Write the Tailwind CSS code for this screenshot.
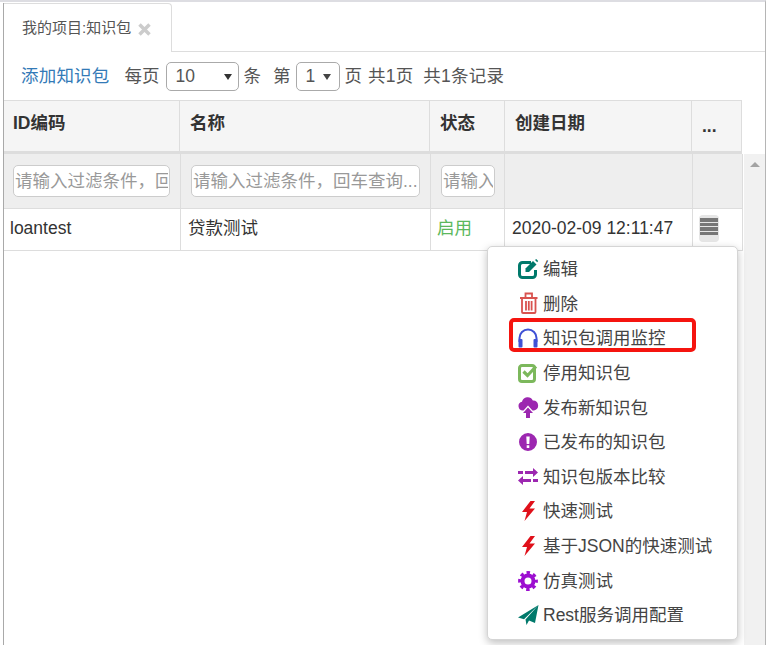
<!DOCTYPE html>
<html lang="zh">

<head>
  <meta charset="utf-8">
  <meta name="viewport" content="width=device-width, initial-scale=1.0">
  <script src="https://cdn.jsdelivr.net/npm/@tailwindcss/browser@4"></script>
  <title>知识包</title>
</head>

<body class="bg-white h-[645px] overflow-hidden font-['Liberation_Sans','Noto_Sans_CJK_SC',sans-serif] text-[17.5px] text-[#333]">
  <div class="relative h-[645px] w-[766px] border-t-2 border-t-[#dddde2] border-r border-r-[#b5b5b5] pt-px">
    <div class="h-[642px] ml-[3px] border-l border-l-[#a9a9a9] flex flex-col">

      <!-- Tabs -->
      <div class="h-[49px] shrink-0 flex border-b border-[#ddd]">
        <div class="w-[168px] h-[49px] bg-white border-r border-t border-[#ddd] rounded-tr-[4px] flex items-center pl-[18px] text-[15px] text-[#555]">
          <span>我的项目:知识包</span>
          <svg class="ml-[7px] mt-[3px] w-[13px] h-[13px]" viewBox="0 0 13 13"><path d="M1.500 1.500l10 10M11.500 1.500l-10 10" stroke="#ccc" stroke-width="3.500"/></svg>
        </div>
      </div>

      <!-- Toolbar -->
      <div class="h-[48px] shrink-0 flex items-center pl-[17px] text-[#555]">
        <a class="text-[#337ab7] mr-[15px] tracking-[0.2px]">添加知识包</a>
        <span>每页</span>
        <div class="relative ml-[6px] mr-[5px] h-[29px]">
          <select class="appearance-none w-[73px] h-[29px] border border-[#aaa] rounded-[5px] pl-[9px] text-[17.5px] bg-white text-[#555]"><option>10</option></select>
          <span class="absolute right-[7px] top-[12px] w-0 h-0 border-x-[4px] border-x-transparent border-t-[6px] border-t-[#333]"></span>
        </div>
        <span>条</span>
        <span class="ml-[12px]">第</span>
        <div class="relative mx-[5px] h-[29px]">
          <select class="appearance-none w-[44px] h-[29px] border border-[#aaa] rounded-[5px] pl-[9px] text-[17.5px] bg-white text-[#555]"><option>1</option></select>
          <span class="absolute right-[9px] top-[12px] w-0 h-0 border-x-[4px] border-x-transparent border-t-[6px] border-t-[#444]"></span>
        </div>
        <span>页</span>
        <span class="ml-[6px] tracking-[0.2px]">共1页</span>
        <span class="ml-[10px] tracking-[0.2px]">共1条记录</span>
      </div>

      <!-- Table head -->
      <div class="w-[738px] h-[54px] shrink-0 grid grid-cols-[176px_250px_75px_187px_50px] bg-[#f5f5f5] border-t border-[#ddd] border-b-[3px] border-b-[#ddd] font-bold text-[#333]">
        <div class="border-r border-[#ddd] pl-[9px] pt-[9px]">ID编码</div>
        <div class="border-r border-[#ddd] pl-[10px] pt-[9px]">名称</div>
        <div class="border-r border-[#ddd] pl-[10px] pt-[9px]">状态</div>
        <div class="border-r border-[#ddd] pl-[10px] pt-[9px]">创建日期</div>
        <div class="border-r border-[#ddd] pl-[10px] pt-[12px]">...</div>
      </div>

      <!-- Table body + scrollbar -->
      <div class="flex-1 flex min-h-0">
        <div class="w-[739px] shrink-0">
          <div class="h-[55px] grid grid-cols-[177px_250px_74px_188px_50px] bg-[#eee] border-b border-[#ddd]">
            <div class="border-r border-[#ddd] pl-[9px] pt-[11px]">
              <input class="w-[157px] h-[32px] bg-white border border-[#ccc] rounded-[5px] px-px text-[17.5px] placeholder:text-[#999]" placeholder="请输入过滤条件，回车查询...">
            </div>
            <div class="border-r border-[#ddd] pl-[10px] pt-[11px]">
              <input class="w-[229px] h-[32px] bg-white border border-[#ccc] rounded-[5px] px-px text-[17.5px] placeholder:text-[#999]" placeholder="请输入过滤条件，回车查询...">
            </div>
            <div class="border-r border-[#ddd] pl-[10px] pt-[11px]">
              <input class="w-[54px] h-[32px] bg-white border border-[#ccc] rounded-[5px] px-px text-[17.5px] placeholder:text-[#999]" placeholder="请输入过滤条件">
            </div>
            <div class="border-r border-[#ddd]"></div>
            <div class="border-r border-[#ddd]"></div>
          </div>
          <div class="h-[42px] grid grid-cols-[177px_250px_74px_188px_50px] border-b border-[#ddd] items-stretch">
            <div class="border-r border-[#ddd] pl-[6px] pb-[2px] flex items-center">loantest</div>
            <div class="border-r border-[#ddd] pl-[7px] pb-[2px] flex items-center">贷款测试</div>
            <div class="border-r border-[#ddd] pl-[6px] pb-[2px] flex items-center text-[#5cb85c]">启用</div>
            <div class="border-r border-[#ddd] pl-[7px] pb-[2px] flex items-center">2020-02-09 12:11:47</div>
            <div class="border-r border-[#ddd] pl-[6px] pt-[6px]">
              <div class="w-[20px] h-[27px] bg-[#e6e6e6] rounded-[4px] flex flex-col gap-px items-center pt-[3px]">
                <span class="w-[18px] h-[3.5px] bg-[#777]"></span>
                <span class="w-[18px] h-[3.5px] bg-[#777]"></span>
                <span class="w-[18px] h-[3.5px] bg-[#777]"></span>
                <span class="w-[18px] h-[3.5px] bg-[#777]"></span>
              </div>
            </div>
          </div>
        </div>
        <div class="w-[22px] ml-px bg-[#f1f1f1] flex justify-center pt-[8px]">
          <span class="w-0 h-0 border-x-[5px] border-x-transparent border-b-[5px] border-b-[#a3a3a3]"></span>
        </div>
      </div>
    </div>

    <!-- Dropdown menu -->
    <div class="absolute left-[487px] top-[244px] w-[251px] h-[394px] bg-white border border-[#d5d5d5] rounded-[5px] shadow-[0_3px_8px_rgba(0,0,0,0.25)] pt-[5px] text-[#444]">
      <div class="h-[34.6px] flex items-center pl-[30px] gap-[3px]">
        <svg class="w-[22px] h-[20px]" viewBox="0 0 22 20"><path d="M13 3.500H4.500a3 3 0 0 0-3 3v9a3 3 0 0 0 3 3h10a3 3 0 0 0 3-3V11" fill="none" stroke="#00796b" stroke-width="3"/><path d="M7.500 9.500 15 2l3.500 3.500L11 13H7.500z" fill="#00796b"/><path d="M17 1l1.200-1 2 2-1 1.300z" fill="#00796b"/></svg>
        <span>编辑</span>
      </div>
      <div class="h-[34.6px] flex items-center pl-[30px] gap-[3px]">
        <svg class="w-[22px] h-[22px] -mt-px" viewBox="0 0 22 22"><path d="M2 6h17.500M7.500 5.500V1.500h6.500v4" fill="none" stroke="#d9534f" stroke-width="1.800"/><path d="M4 6v14a1 1 0 0 0 1 1h11.500a1 1 0 0 0 1-1V6M8 9v9.500M10.800 9v9.500M13.600 9v9.500" fill="none" stroke="#d9534f" stroke-width="1.800"/></svg>
        <span>删除</span>
      </div>
      <div class="relative h-[34.6px] flex items-center pl-[30px] gap-[3px]">
        <svg class="w-[22px] h-[20px]" viewBox="0 0 22 20"><path d="M1.500 14V10a8.500 8.500 0 0 1 17 0V14" fill="none" stroke="#3f51d5" stroke-width="2"/><rect x="0.500" y="11" width="4" height="8.500" rx="1" fill="#3f51d5"/><rect x="15.500" y="11" width="4" height="8.500" rx="1" fill="#3f51d5"/></svg>
        <span>知识包调用监控</span>
        <div class="absolute left-[21px] top-[-3px] w-[187px] h-[34px] border-[4px] border-[#f5140f] rounded-[5px]"></div>
      </div>
      <div class="h-[34.6px] flex items-center pl-[30px] gap-[3px]">
        <svg class="w-[22px] h-[20px]" viewBox="0 0 22 20"><path d="M1.500 5a2.500 2.500 0 0 1 2.500-2.500h10a2.500 2.500 0 0 1 2.500 2.500v11a2.500 2.500 0 0 1-2.500 2.500H4A2.500 2.500 0 0 1 1.500 16z" fill="none" stroke="#7cb85c" stroke-width="3"/><path d="M5.500 8.500l4 4 8.500-9" fill="none" stroke="#7cb85c" stroke-width="3.200"/></svg>
        <span>停用知识包</span>
      </div>
      <div class="h-[34.6px] flex items-center pl-[30px] gap-[3px]">
        <svg class="w-[22px] h-[21px]" viewBox="0 0 22 21"><path d="M5 13.500a4.400 4.400 0 0 1-1-8.700 5.800 5.800 0 0 1 10.800-1.400A5.100 5.100 0 0 1 16 13.500h-1.500L10 8.500 5.500 13.500z" fill="#9c27b0"/><path d="M10 10.500 15 16h-3v5H8v-5H5z" fill="#9c27b0"/></svg>
        <span>发布新知识包</span>
      </div>
      <div class="h-[34.6px] flex items-center pl-[30px] gap-[3px]">
        <svg class="w-[22px] h-[20px]" viewBox="0 0 22 20"><path fill-rule="evenodd" d="M10 1a9 9 0 1 1 0 18 9 9 0 0 1 0-18zM8.300 4.500l.4 7.500h2.600l.4-7.500zM8.700 13.300v2.700h2.600v-2.700z" fill="#9c27b0"/></svg>
        <span>已发布的知识包</span>
      </div>
      <div class="h-[34.6px] flex items-center pl-[30px] gap-[3px]">
        <svg class="w-[22px] h-[20px]" viewBox="0 0 22 20"><path d="M0 4h5v3H0zM7 4h8V1l5 4.500L15 10V7H7zM20 12h-5v3h5zM13 12H5V9l-5 4.500L5 18v-3h8z" fill="#9c27b0"/></svg>
        <span>知识包版本比较</span>
      </div>
      <div class="h-[34.6px] flex items-center pl-[30px] gap-[3px]">
        <svg class="w-[22px] h-[20px]" viewBox="0 0 22 20"><path d="M12.500 0 4 11h5L6.500 20 17 7.500h-5.500L17 0z" fill="#e0101a"/></svg>
        <span>快速测试</span>
      </div>
      <div class="h-[34.6px] flex items-center pl-[30px] gap-[3px]">
        <svg class="w-[22px] h-[20px]" viewBox="0 0 22 20"><path d="M12.500 0 4 11h5L6.500 20 17 7.500h-5.500L17 0z" fill="#e0101a"/></svg>
        <span>基于JSON的快速测试</span>
      </div>
      <div class="h-[34.6px] flex items-center pl-[30px] gap-[3px]">
        <svg class="w-[22px] h-[20px]" viewBox="0 0 22 20"><circle cx="10" cy="10" r="5.500" fill="none" stroke="#9c0fd0" stroke-width="4"/><circle cx="10" cy="10" r="8.200" fill="none" stroke="#9c0fd0" stroke-width="3.400" stroke-dasharray="3.400 3.040" stroke-dashoffset="1.700"/></svg>
        <span>仿真测试</span>
      </div>
      <div class="h-[34.6px] flex items-center pl-[30px] gap-[3px]">
        <svg class="w-[22px] h-[20px]" viewBox="0 0 22 20"><path d="M20.500 0 0 12.500l6 1.800zM20.500 0 7.500 14.500l1 5.500 2.500-4.500 6 2.500z" fill="#00796b"/></svg>
        <span>Rest服务调用配置</span>
      </div>
    </div>
  </div>
</body>

</html>
